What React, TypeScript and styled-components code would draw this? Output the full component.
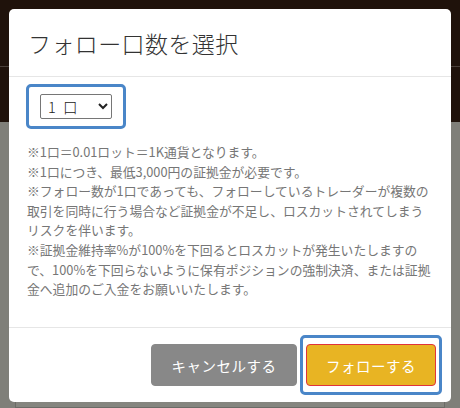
import styled, { createGlobalStyle } from "styled-components";

const GlobalStyle = createGlobalStyle`
  html, body {
    margin: 0;
    padding: 0;
    width: 460px;
    height: 408px;
    overflow: hidden;
    font-family: "Noto Sans CJK JP", "Noto Sans", sans-serif;
  }
`

const Page = styled.div`
  position: relative;
  width: 460px;
  height: 408px;
  background: #7f7f79;
  display: flex;
  flex-direction: column;
`

const TopBar = styled.div`
  height: 122px;
  background: #1f120b;
  display: flex;
  flex-direction: column;
  .rule {
    margin-top: 66px;
    height: 1px;
    background: #4a403a;
  }
`

const BackCard = styled.div`
  margin: 279px 15px 0;
  flex: 1;
  border: 1px solid #6b6b66;
  background: #85857f;
`

const Modal = styled.div`
  position: absolute;
  left: 9px;
  top: 9px;
  width: 442px;
  height: 393px;
  background: #fff;
  border-radius: 5px;
  display: flex;
  flex-direction: column;
`

const Header = styled.div`
  height: 68px;
  box-sizing: border-box;
  border-bottom: 1px solid #e6e6e6;
  padding: 0 0 0 19px;
  display: flex;
  align-items: center;
  h2 {
    margin: 0;
    font-size: 23px;
    font-weight: 300;
    letter-spacing: 0.4px;
    color: #333;
  }
`

const Body = styled.div`
  flex: 1;
  padding: 7px 15px 0 17px;
`

const FocusRing = styled.div<{ $pad?: string }>`
  display: inline-flex;
  border: 3px solid #4a86c8;
  border-radius: 5px;
  padding: ${p => p.$pad ?? "0"};
`

const Select = styled.select`
  width: 72px;
  height: 25px;
  font-family: "Noto Sans CJK JP", sans-serif;
  font-size: 14.5px;
  font-weight: 300;
  color: #222;
  border: 1px solid #767676;
  border-radius: 2px;
  background: #fff;
  padding: 0 0 0 3px;
`

const Notes = styled.div`
  margin-top: 13px;
  padding-left: 1px;
  font-size: 12.8px;
  line-height: 19.6px;
  color: #767676;
`

const Note = styled.p<{ $loose?: boolean }>`
  margin: 0;
  line-break: ${p => (p.$loose ? "anywhere" : "auto")};
`

const Footer = styled.div`
  height: 75px;
  box-sizing: border-box;
  border-top: 1px solid #e6e6e6;
  display: flex;
  justify-content: flex-end;
  align-items: flex-start;
  gap: 3px;
  padding: 7px 9px 0 0;
`

const Button = styled.button<{ $tone: "cancel" | "follow" }>`
  height: 42px;
  border-radius: 4px;
  font-family: "Noto Sans CJK JP", sans-serif;
  font-size: 14.5px;
  letter-spacing: 0.5px;
  color: #fff;
  cursor: pointer;
  border: 1px solid ${p => (p.$tone === "follow" ? "#e0343c" : "#888")};
  background: ${p => (p.$tone === "follow" ? "#e8b423" : "#888")};
  width: ${p => (p.$tone === "follow" ? "130px" : "146px")};
  margin-top: ${p => (p.$tone === "follow" ? "0" : "9px")};
`

export default function App() {
  return (
    <>
      <GlobalStyle />
      <Page>
        <TopBar><div className="rule" /></TopBar>
        <BackCard />
        <Modal>
          <Header>
            <h2>フォロー口数を選択</h2>
          </Header>
          <Body>
            <FocusRing $pad="7px 11px 7px 11px">
              <Select defaultValue="1">
                <option value="1">1{"\u2002"}口</option>
                <option value="2">2{"\u2002"}口</option>
                <option value="3">3{"\u2002"}口</option>
              </Select>
            </FocusRing>
            <Notes>
              <Note>※1口＝0.01ロット＝1K通貨となります。</Note>
              <Note>※1口につき、最低3,000円の証拠金が必要です。</Note>
              <Note $loose>※フォロー数が1口であっても、フォローしているトレーダーが複数の取引を同時に行う場合など証拠金が不足し、ロスカットされてしまうリスクを伴います。</Note>
              <Note>※証拠金維持率%が100%を下回るとロスカットが発生いたしますので、100%を下回らないように保有ポジションの強制決済、または証拠金へ追加のご入金をお願いいたします。</Note>
            </Notes>
          </Body>
          <Footer>
            <Button $tone="cancel">キャンセルする</Button>
            <FocusRing $pad="6px 3px">
              <Button $tone="follow">フォローする</Button>
            </FocusRing>
          </Footer>
        </Modal>
      </Page>
    </>
  )
}
